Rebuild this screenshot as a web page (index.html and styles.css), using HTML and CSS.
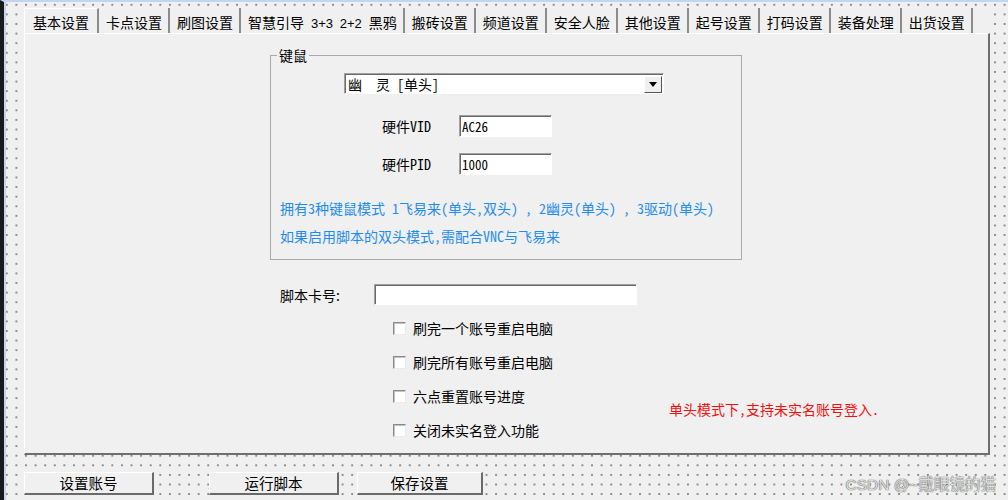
FILE: index.html
```html
<!DOCTYPE html>
<html lang="zh-CN">
<head>
<meta charset="utf-8">
<title>基本设置</title>
<link rel="stylesheet" href="styles.css">
</head>
<body>
<div class="screen">
  <div class="form">
    <div class="tabctl">
      <ul class="tabs">
        <li class="tab active">基本设置</li>
        <li class="tab">卡点设置</li>
        <li class="tab">刷图设置</li>
        <li class="tab">智慧引导<span class="lat">3+3 2+2</span>黑鸦</li>
        <li class="tab">搬砖设置</li>
        <li class="tab">频道设置</li>
        <li class="tab">安全人脸</li>
        <li class="tab">其他设置</li>
        <li class="tab">起号设置</li>
        <li class="tab">打码设置</li>
        <li class="tab">装备处理</li>
        <li class="tab">出货设置</li>
      </ul>
      <div class="page">
        <fieldset class="group">
          <legend>键鼠</legend>
          <div class="combo">
            <span class="combo-text">幽  灵 [单头]</span>
            <span class="combo-btn"><svg width="8" height="5" viewBox="0 0 8 5"><path d="M0 0H8L4 5Z" fill="#000"/></svg></span>
          </div>
          <div class="field"><span class="flabel">硬件VID</span><span class="input">AC26</span></div>
          <div class="field pid"><span class="flabel">硬件PID</span><span class="input">1000</span></div>
          <p class="note first">拥有3种键鼠模式 1飞易来(单头,双头) ， 2幽灵(单头) ， 3驱动(单头)</p>
          <p class="note">如果启用脚本的双头模式,需配合VNC与飞易来</p>
        </fieldset>
        <div class="card-row"><span class="clabel">脚本卡号:</span><span class="input wide"></span></div>
        <div class="opts">
          <ul class="checks">
            <li><span class="cb"></span>刷完一个账号重启电脑</li>
            <li><span class="cb"></span>刷完所有账号重启电脑</li>
            <li><span class="cb"></span>六点重置账号进度</li>
            <li><span class="cb"></span>关闭未实名登入功能</li>
          </ul>
          <p class="warn">单头模式下,支持未实名账号登入.</p>
        </div>
      </div>
    </div>
    <div class="buttons">
      <button class="btn b1">设置账号</button>
      <button class="btn b2">运行脚本</button>
      <button class="btn b3">保存设置</button>
    </div>
  </div>
  <div class="watermark">CSDN @~戴眼镜的猫</div>
</div>
</body>
</html>
```
FILE: styles.css
```css
html, body {
  margin: 0;
  padding: 0;
}
body {
  width: 1008px;
  height: 500px;
  overflow: hidden;
  background: #f0f0f0;
  font-family: "Noto Sans CJK SC", sans-serif;
  font-size: 14px;
  color: #000;
}
.screen {
  position: relative;
  width: 1008px;
  height: 500px;
  box-sizing: border-box;
  border-left: 4px solid #171b1d;
  border-top: 2px solid #c2d4ee;
  background-color: #f0f0f0;
  background-image: radial-gradient(circle, #8a8a8a 0, #8a8a8a 0.7px, rgba(138,138,138,0) 1.3px);
  background-size: 9.6px 9.6px;
  background-position: -2px -2px;
}
.form {
  height: 100%;
  box-sizing: border-box;
  border-left: 2px solid #c8d3e8;
  padding: 6px 0 0 18px;
}
.tabctl {
  width: 966px;
  background: #f0f0f0;
}
.tabs {
  display: flex;
  list-style: none;
  margin: 0;
  padding: 0;
  height: 25px;
}
.tab {
  padding: 5px 6px 0 7px;
  line-height: 18px;
  height: 20px;
  border-right: 2px solid #8c8c8c;
  white-space: nowrap;
  font-size: 14px;
}
.tab.active {
  border-left: 1px solid #fff;
  border-top: 1px solid #fff;
  padding: 4px 8px 0 8px;
}
.lat {
  font-family: "Liberation Sans", sans-serif;
  font-size: 13px;
  margin: 0 7px;
  word-spacing: 3px;
}
.page {
  height: 422px;
  box-sizing: border-box;
  border-style: solid;
  border-width: 1px 2px 2px 1px;
  border-color: #fff #6e6e6e #6e6e6e #fff;
  padding-left: 245px;
  padding-top: 13px;
}
.group {
  margin: 0;
  width: 472px;
  box-sizing: border-box;
  border: 1px solid #a9a9a9;
  padding: 0 0 9px 0;
  min-width: 0;
}
.group legend {
  margin-left: 6px;
  padding: 0 2px;
  line-height: 16px;
  font-size: 14px;
}
.combo {
  margin: 10px 0 0 73px;
  width: 320px;
  height: 21px;
  box-sizing: border-box;
  background: #fff;
  border: 1px solid;
  border-color: #a0a0a0 #fff #fff #a0a0a0;
  box-shadow: inset 1px 1px 0 #6a6a6a;
  display: flex;
  align-items: center;
  justify-content: space-between;
  padding: 1px 1px 0 3px;
}
.combo-text {
  line-height: 17px;
  font-size: 14px;
  white-space: pre;
  font-feature-settings: "hwid";
}
.combo-btn {
  width: 18px;
  height: 17px;
  box-sizing: border-box;
  background: #f0f0f0;
  border: 1px solid;
  border-color: #fff #555 #555 #fff;
  display: flex;
  align-items: center;
  justify-content: center;
}
.field {
  display: flex;
  align-items: center;
  margin: 21px 0 0 111px;
}
.field.pid {
  margin-top: 16px;
}
.flabel {
  width: 77px;
  font-size: 14px;
  line-height: 18px;
  font-feature-settings: "hwid";
}
.input {
  display: block;
  width: 93px;
  height: 22px;
  box-sizing: border-box;
  background: #fff;
  border: 1px solid;
  border-color: #a0a0a0 #fff #fff #a0a0a0;
  box-shadow: inset 1px 1px 0 #6a6a6a;
  padding: 2px 0 0 2px;
  font-size: 13px;
  line-height: 17px;
  font-feature-settings: "hwid";
}
.note {
  margin: 0 0 0 9px;
  line-height: 28px;
  color: #1f8cee;
  white-space: nowrap;
  font-feature-settings: "hwid";
}
.note.first {
  margin-top: 19px;
}
.card-row {
  display: flex;
  align-items: center;
  margin: 24px 0 0 10px;
}
.clabel {
  width: 94px;
  line-height: 18px;
}
.input.wide {
  width: 263px;
  height: 21px;
}
.opts {
  display: flex;
  margin-top: 6px;
}
.checks {
  list-style: none;
  margin: 0 0 0 123px;
  padding: 0;
  width: 276px;
}
.checks li {
  height: 34px;
  display: flex;
  align-items: center;
  gap: 7px;
}
.cb {
  width: 13px;
  height: 13px;
  box-sizing: border-box;
  background: #fff;
  border: 1px solid;
  border-color: #8a8a8a #eaeaea #eaeaea #8a8a8a;
  box-shadow: inset 1px 1px 0 #c4c4c4;
}
.warn {
  margin: 84px 0 0 0;
  line-height: 28px;
  color: #f01010;
  white-space: nowrap;
  font-feature-settings: "hwid";
}
.buttons {
  display: flex;
  margin-top: 17px;
}
.btn {
  height: 23px;
  box-sizing: border-box;
  background: #f0f0f0;
  border-style: solid;
  border-width: 1px 2px 2px 1px;
  border-color: #fff #6a6a6a #6a6a6a #fff;
  font-family: "Noto Sans CJK SC", sans-serif;
  font-size: 14.5px;
  line-height: 18px;
  padding: 0;
  color: #000;
}
.b1 { width: 130px; }
.b2 { width: 130px; margin-left: 55px; }
.b3 { width: 126px; margin-left: 18px; }
.watermark {
  position: absolute;
  right: 12px;
  bottom: 6px;
  font-family: "Liberation Sans", "Noto Sans CJK SC", sans-serif;
  font-size: 15.5px;
  line-height: 18px;
  color: #dcdcdc;
  text-shadow: 0 0 1px #5e5e5e, 0 0 1px #5e5e5e;
}
```
